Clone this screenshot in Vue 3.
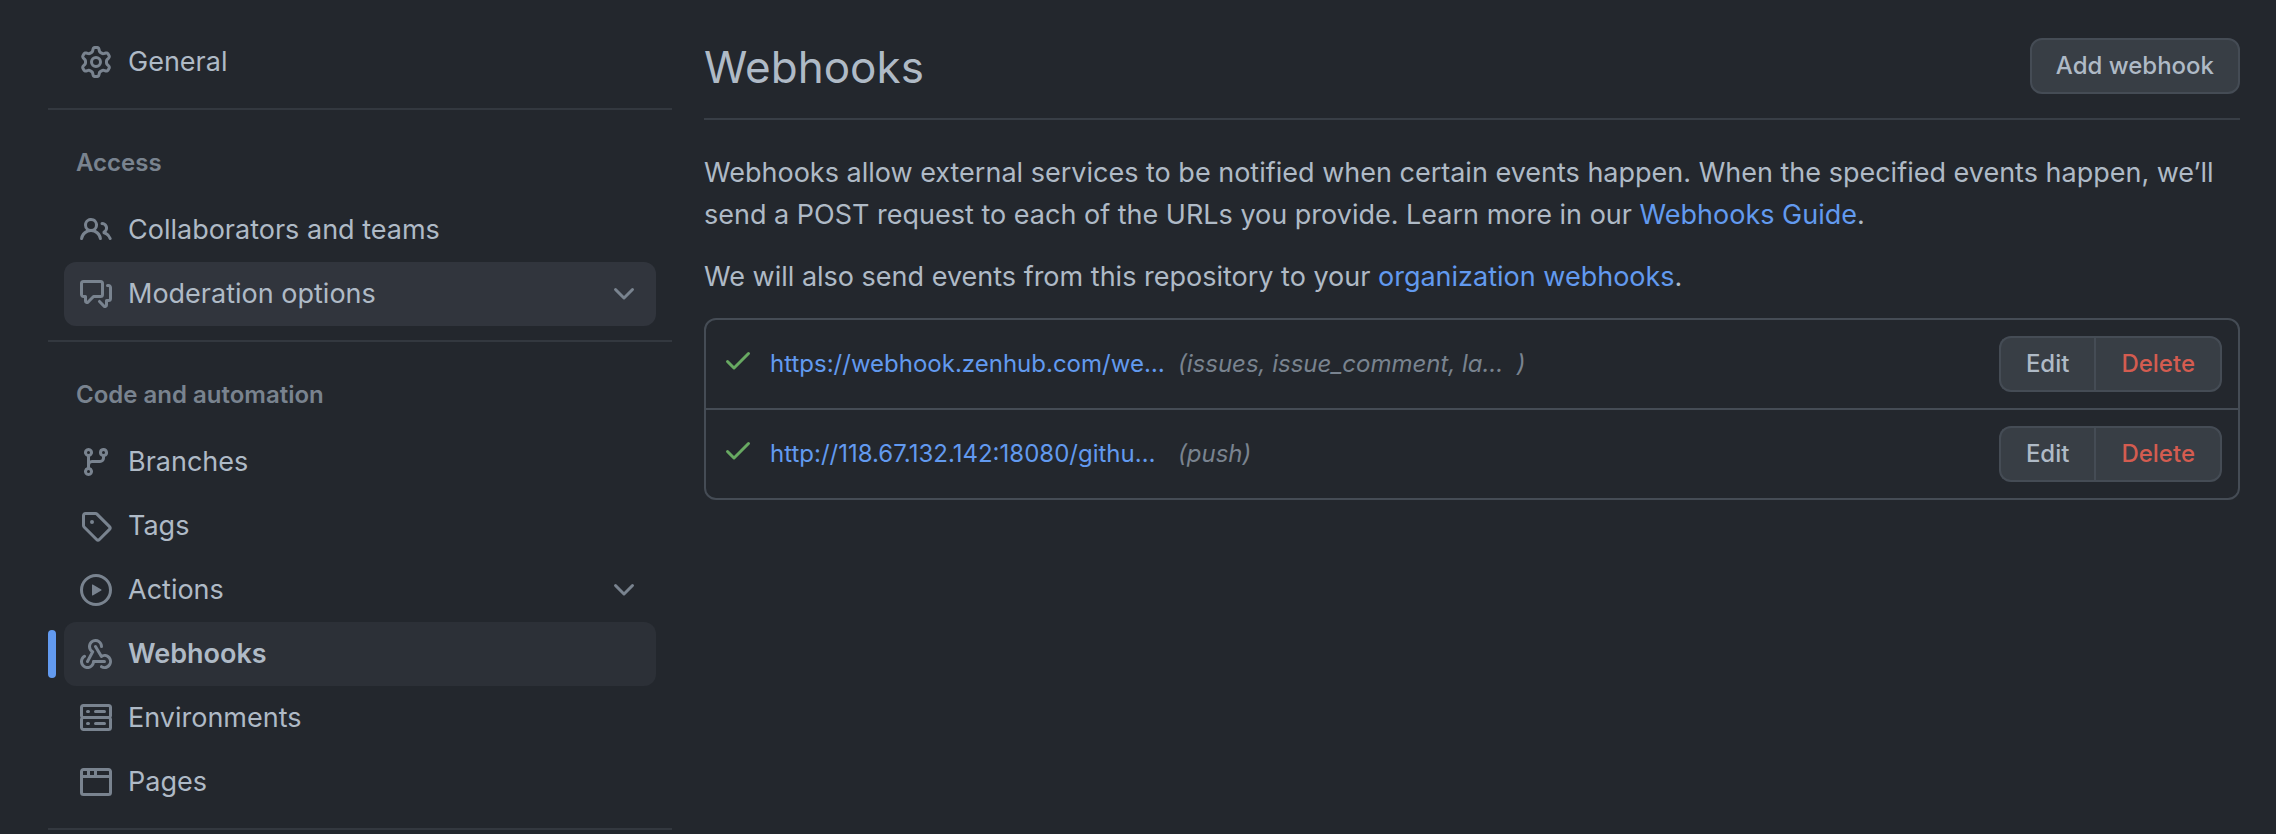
<script setup>
const icons = {
  gear: 'M7.429 1.525a6.593 6.593 0 011.142 0c.036.003.108.036.137.146l.289 1.105c.147.56.55.967.997 1.189.174.086.341.183.501.29.417.278.97.423 1.53.27l1.102-.303c.11-.03.175.016.195.046.219.31.41.641.573.989.014.031.022.11-.059.19l-.815.806c-.411.406-.562.957-.53 1.456a4.588 4.588 0 010 .582c-.032.499.119 1.05.53 1.456l.815.806c.08.08.073.159.059.19a6.494 6.494 0 01-.573.99c-.02.029-.086.074-.195.045l-1.103-.303c-.559-.153-1.112-.008-1.529.27-.16.107-.327.204-.5.29-.449.222-.851.628-.998 1.189l-.289 1.105c-.029.11-.101.143-.137.146a6.613 6.613 0 01-1.142 0c-.036-.003-.108-.037-.137-.146l-.289-1.105c-.147-.56-.55-.967-.997-1.189a4.502 4.502 0 01-.501-.29c-.417-.278-.97-.423-1.53-.27l-1.102.303c-.11.03-.175-.016-.195-.046a6.492 6.492 0 01-.573-.989c-.014-.031-.022-.11.059-.19l.815-.806c.411-.406.562-.957.53-1.456a4.587 4.587 0 010-.582c.032-.499-.119-1.05-.53-1.456l-.815-.806c-.08-.08-.073-.159-.059-.19a6.44 6.44 0 01.573-.99c.02-.029.086-.075.195-.045l1.103.303c.559.153 1.112.008 1.529-.27.16-.107.327-.204.5-.29.449-.222.851-.628.998-1.189l.289-1.105c.029-.11.101-.143.137-.146zM8 0c-.236 0-.47.01-.701.03-.743.065-1.29.615-1.458 1.261l-.29 1.106c-.017.066-.078.158-.211.224a5.994 5.994 0 00-.668.386c-.123.082-.233.09-.3.071L3.27 2.776c-.644-.177-1.392.02-1.82.63a7.977 7.977 0 00-.704 1.217c-.315.675-.111 1.422.363 1.891l.815.806c.05.048.098.147.088.294a6.084 6.084 0 000 .772c.01.147-.038.246-.088.294l-.815.806c-.474.469-.678 1.216-.363 1.891.2.428.436.835.704 1.218.428.609 1.176.806 1.82.63l1.103-.303c.066-.019.176-.011.299.071.213.143.436.272.668.386.133.066.194.158.212.224l.289 1.106c.169.646.715 1.196 1.458 1.26a8.094 8.094 0 001.402 0c.743-.064 1.29-.614 1.458-1.26l.29-1.106c.017-.066.078-.158.211-.224a5.98 5.98 0 00.668-.386c.123-.082.233-.09.3-.071l1.102.302c.644.177 1.392-.02 1.82-.63.268-.382.505-.789.704-1.217.315-.675.111-1.422-.364-1.891l-.814-.806c-.05-.048-.098-.147-.088-.294a6.1 6.1 0 000-.772c-.01-.147.039-.246.088-.294l.814-.806c.475-.469.679-1.216.364-1.891a7.992 7.992 0 00-.704-1.218c-.428-.609-1.176-.806-1.82-.63l-1.103.303c-.066.019-.176.011-.299-.071a5.991 5.991 0 00-.668-.386c-.133-.066-.194-.158-.212-.224L10.16 1.29C9.99.645 9.444.095 8.701.031A8.094 8.094 0 008 0zm1.5 8a1.5 1.5 0 11-3 0 1.5 1.5 0 013 0zM11 8a3 3 0 11-6 0 3 3 0 016 0z',
  people: 'M5.5 3.5a2 2 0 100 4 2 2 0 000-4zM2 5.5a3.5 3.5 0 115.898 2.549 5.507 5.507 0 013.034 4.084.75.75 0 11-1.482.235 4.001 4.001 0 00-7.9 0 .75.75 0 01-1.482-.236A5.507 5.507 0 013.102 8.05 3.49 3.49 0 012 5.5zM11 4a.75.75 0 100 1.5 1.5 1.5 0 01.666 2.844.75.75 0 00-.416.672v.352a.75.75 0 00.574.73c1.2.289 2.162 1.2 2.522 2.372a.75.75 0 101.434-.44 5.01 5.01 0 00-2.56-3.012A3 3 0 0011 4z',
  discussion: 'M1.5 2.75a.25.25 0 01.25-.25h8.5a.25.25 0 01.25.25v5.5a.25.25 0 01-.25.25h-3.5a.75.75 0 00-.53.22L3.5 11.44V9.25a.75.75 0 00-.75-.75h-1a.25.25 0 01-.25-.25v-5.5zM1.75 1A1.75 1.75 0 000 2.75v5.5C0 9.216.784 10 1.75 10H2v1.543a1.457 1.457 0 002.487 1.03L7.061 10h3.189A1.75 1.75 0 0012 8.25v-5.5A1.75 1.75 0 0010.25 1h-8.5zM14.5 4.75a.25.25 0 00-.25-.25h-.5a.75.75 0 110-1.5h.5c.966 0 1.75.784 1.75 1.75v5.5A1.75 1.75 0 0114.25 12H14v1.543a1.457 1.457 0 01-2.487 1.03L9.22 12.28a.75.75 0 111.06-1.06l2.22 2.22v-2.19a.75.75 0 01.75-.75h1a.25.25 0 00.25-.25v-5.5z',
  branch: 'M11.75 2.5a.75.75 0 100 1.5.75.75 0 000-1.5zm-2.25.75a2.25 2.25 0 113 2.122V6A2.5 2.5 0 0110 8.5H6a1 1 0 00-1 1v1.128a2.251 2.251 0 11-1.5 0V5.372a2.25 2.25 0 111.5 0v1.836A2.492 2.492 0 016 7h4a1 1 0 001-1v-.628A2.25 2.25 0 019.5 3.25zM4.25 12a.75.75 0 100 1.5.75.75 0 000-1.5zM3.5 3.25a.75.75 0 111.5 0 .75.75 0 01-1.5 0z',
  tag: 'M2.5 7.775V2.75a.25.25 0 01.25-.25h5.025a.25.25 0 01.177.073l6.25 6.25a.25.25 0 010 .354l-5.025 5.025a.25.25 0 01-.354 0l-6.25-6.25a.25.25 0 01-.073-.177zm-1.5 0V2.75C1 1.784 1.784 1 2.75 1h5.025c.464 0 .91.184 1.238.513l6.25 6.25a1.75 1.75 0 010 2.474l-5.026 5.026a1.75 1.75 0 01-2.474 0l-6.25-6.25A1.75 1.75 0 011 7.775zM6 5a1 1 0 100 2 1 1 0 000-2z',
  play: 'M1.5 8a6.5 6.5 0 1113 0 6.5 6.5 0 01-13 0zM8 0a8 8 0 100 16A8 8 0 008 0zM6.379 5.227A.25.25 0 006 5.442v5.117a.25.25 0 00.379.214l4.264-2.559a.25.25 0 000-.428L6.379 5.227z',
  webhook: 'M5.5 4.25a2.25 2.25 0 014.5 0 .75.75 0 001.5 0 3.75 3.75 0 10-6.14 2.889l-2.272 4.258a.75.75 0 001.324.706L7 7.25a.75.75 0 00-.309-1.015A2.25 2.25 0 015.5 4.25zM7.364 3.607a.75.75 0 011.03.257l2.608 4.349a3.75 3.75 0 11-.628 6.785.75.75 0 01.752-1.299 2.25 2.25 0 10-.033-3.88.75.75 0 01-1.03-.256L7.107 4.636a.75.75 0 01.257-1.03zM2.9 8.776A.75.75 0 012.625 9.8 2.25 2.25 0 106 11.75a.75.75 0 01.75-.751h5.5a.75.75 0 010 1.5H7.425a3.751 3.751 0 11-5.55-3.998.75.75 0 011.024.274z',
  server: 'M1.75 1A1.75 1.75 0 000 2.75v4c0 .372.116.717.314 1a1.742 1.742 0 00-.314 1v4c0 .966.784 1.75 1.75 1.75h12.5A1.75 1.75 0 0016 12.75v-4c0-.372-.116-.717-.314-1 .198-.283.314-.628.314-1v-4A1.75 1.75 0 0014.25 1H1.75zm0 7.5a.25.25 0 00-.25.25v4c0 .138.112.25.25.25h12.5a.25.25 0 00.25-.25v-4a.25.25 0 00-.25-.25H1.75zM1.5 2.75a.25.25 0 01.25-.25h12.5a.25.25 0 01.25.25v4a.25.25 0 01-.25.25H1.75a.25.25 0 01-.25-.25v-4zm5.5 2A.75.75 0 017.75 4h4.5a.75.75 0 010 1.5h-4.5A.75.75 0 017 4.75zM7.75 10a.75.75 0 000 1.5h4.5a.75.75 0 000-1.5h-4.5zM3 4.75A.75.75 0 013.75 4h.5a.75.75 0 010 1.5h-.5A.75.75 0 013 4.75zM3.75 10a.75.75 0 000 1.5h.5a.75.75 0 000-1.5h-.5z',
  browser: 'M0 2.75C0 1.784.784 1 1.75 1h12.5c.966 0 1.75.784 1.75 1.75v10.5A1.75 1.75 0 0114.25 15H1.75A1.75 1.75 0 010 13.25V2.75zm1.75-.25a.25.25 0 00-.25.25V4.5h2v-2H1.75zM5 2.5v2h2v-2H5zm3.5 0v2h6V2.75a.25.25 0 00-.25-.25H8.5zM1.5 6v7.25c0 .138.112.25.25.25h12.5a.25.25 0 00.25-.25V6h-13z',
  chevron: 'M12.78 6.22a.75.75 0 010 1.06l-4.25 4.25a.75.75 0 01-1.06 0L3.22 7.28a.75.75 0 011.06-1.06L8 9.94l3.72-3.72a.75.75 0 011.06 0z',
  check: 'M13.78 4.22a.75.75 0 010 1.06l-7.25 7.25a.75.75 0 01-1.06 0L2.22 9.28a.75.75 0 011.06-1.06L6 10.94l6.72-6.72a.75.75 0 011.06 0z',
}

const groups = [
  { items: [{ label: 'General', icon: 'gear' }] },
  {
    title: 'Access',
    items: [
      { label: 'Collaborators and teams', icon: 'people' },
      { label: 'Moderation options', icon: 'discussion', expandable: true, hovered: true },
    ],
  },
  {
    title: 'Code and automation',
    items: [
      { label: 'Branches', icon: 'branch' },
      { label: 'Tags', icon: 'tag' },
      { label: 'Actions', icon: 'play', expandable: true },
      { label: 'Webhooks', icon: 'webhook', current: true },
      { label: 'Environments', icon: 'server' },
      { label: 'Pages', icon: 'browser' },
    ],
  },
]

const hooks = [
  { url: 'https://webhook.zenhub.com/we…', events: '(issues, issue_comment, la…\u00a0 )' },
  { url: 'http://118.67.132.142:18080/githu…', events: '(push)' },
]
</script>

<template>
  <div class="page">
    <nav class="sidebar" aria-label="Repository settings">
      <section v-for="(group, i) in groups" :key="i" class="group">
        <h2 v-if="group.title" class="group-title">{{ group.title }}</h2>
        <ul class="list">
          <li v-for="item in group.items" :key="item.label" class="entry" :class="{ current: item.current }">
            <component
              :is="item.expandable ? 'button' : 'a'"
              class="item"
              :class="{ hovered: item.hovered }"
              :href="item.expandable ? undefined : '#'"
              :type="item.expandable ? 'button' : undefined"
              :aria-expanded="item.expandable ? 'false' : undefined"
              :aria-current="item.current ? 'page' : undefined"
            >
              <svg class="icon" viewBox="0 0 16 16" aria-hidden="true">
                <path fill-rule="evenodd" :d="icons[item.icon]" />
              </svg>
              <span class="label">{{ item.label }}</span>
              <svg v-if="item.expandable" class="icon chevron" viewBox="0 0 16 16" aria-hidden="true">
                <path fill-rule="evenodd" :d="icons.chevron" />
              </svg>
            </component>
          </li>
        </ul>
      </section>
    </nav>

    <main class="content">
      <header class="head">
        <h1 class="title">Webhooks</h1>
        <button type="button" class="btn">Add webhook</button>
      </header>
      <p class="text">
        Webhooks allow external services to be notified when certain events happen. When the specified events happen,
        we’ll send a POST request to each of the URLs you provide. Learn more in our
        <a href="#" class="link">Webhooks Guide</a>.
      </p>
      <p class="text">
        We will also send events from this repository to your <a href="#" class="link">organization webhooks</a>.
      </p>
      <ul class="hooks">
        <li v-for="hook in hooks" :key="hook.url" class="hook">
          <svg class="icon check" viewBox="0 0 16 16" aria-hidden="true">
            <path fill-rule="evenodd" :d="icons.check" />
          </svg>
          <a href="#" class="link url">{{ hook.url }}</a>
          <em class="events">{{ hook.events }}</em>
          <div class="actions">
            <button type="button" class="btn first">Edit</button>
            <button type="button" class="btn danger">Delete</button>
          </div>
        </li>
      </ul>
    </main>
  </div>
</template>

<style>
html {
  background: #23272d;
}
</style>

<style scoped>
.page {
  display: grid;
  grid-template-columns: 624px minmax(0, 1fr);
  gap: 32px;
  padding: 30px 36px 0 48px;
  color: #afbac6;
  font-family: Inter, "Liberation Sans", sans-serif;
  font-size: 27px;
  line-height: 42px;
}

ul,
h1,
h2,
p {
  margin: 0;
  padding: 0;
}

ul {
  list-style: none;
}

.group {
  padding-bottom: 14px;
  border-bottom: 2px solid #33383f;
}

.group-title {
  padding: 35px 28px 17px;
  color: #79838f;
  font-size: 24px;
  font-weight: 600;
  line-height: 36px;
}

.entry {
  position: relative;
  padding: 0 16px;
}

.entry.current::before {
  content: "";
  position: absolute;
  top: 8px;
  bottom: 8px;
  left: 0;
  width: 8px;
  border-radius: 4px;
  background: #629aef;
}

.item {
  display: flex;
  align-items: center;
  gap: 16px;
  box-sizing: border-box;
  width: 100%;
  padding: 12px 16px;
  border: 0;
  border-radius: 12px;
  background: none;
  color: #afbac6;
  font: inherit;
  line-height: 40px;
  text-align: left;
  text-decoration: none;
}

.item.hovered {
  background: #31353d;
}

.current .item {
  background: #2c3037;
  font-weight: 600;
}

.label {
  flex: 1;
}

.icon {
  flex: none;
  width: 32px;
  height: 32px;
  fill: #79838f;
}

.chevron {
  margin-bottom: 4px;
}

.head {
  display: flex;
  align-items: flex-end;
  justify-content: space-between;
  padding: 8px 0 24px;
  margin-bottom: 32px;
  border-bottom: 2px solid #383e46;
}

.title {
  font-size: 44px;
  font-weight: 400;
  line-height: 54px;
}

.text {
  margin-bottom: 20px;
}

.link {
  color: #629aef;
  text-decoration: none;
}

.btn {
  box-sizing: border-box;
  padding: 8px 24px;
  border: 2px solid #454c55;
  border-radius: 12px;
  background: #383e45;
  color: #afbac6;
  font: 500 24px/36px Inter, "Liberation Sans", sans-serif;
}

.hooks {
  border: 2px solid #454c55;
  border-radius: 12px;
}

.hook {
  display: flex;
  align-items: center;
  padding: 16px;
  font-size: 24px;
  line-height: 36px;
}

.hook + .hook {
  border-top: 2px solid #454c55;
}

.check {
  margin: 0 16px 8px 0;
  fill: #68a962;
}

.url {
  width: 400px;
  margin-right: 8px;
  white-space: nowrap;
}

.events {
  flex: 1;
  color: #79838f;
}

.actions {
  display: flex;
}

.actions .btn {
  padding: 8px 25px;
}

.actions .first {
  border-right: 0;
  border-radius: 12px 0 0 12px;
}

.actions .danger {
  border-radius: 0 12px 12px 0;
  color: #d45c50;
}
</style>
